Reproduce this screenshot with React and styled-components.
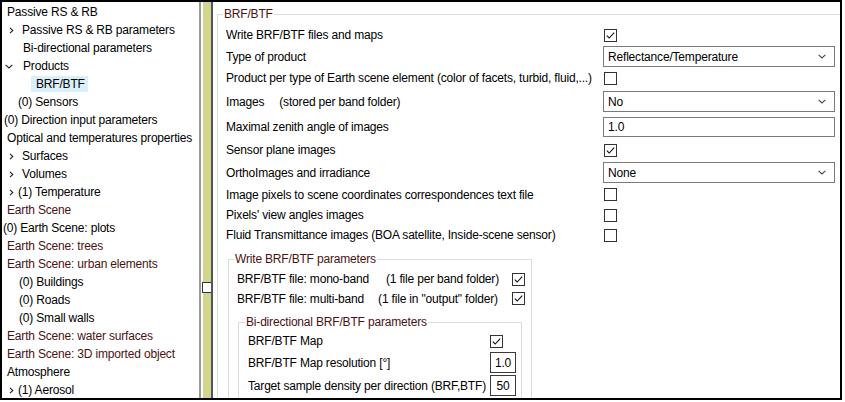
import React from "react";
import styled, { createGlobalStyle } from "styled-components";

const GlobalStyle = createGlobalStyle`
  html, body {
    margin: 0;
    padding: 0;
    background: #fff;
  }
  body {
    font-family: "Liberation Sans", Arial, sans-serif;
    font-size: 12px;
    letter-spacing: -0.18px;
    color: #000;
  }
`;

const Frame = styled.div`
  width: 842px;
  height: 400px;
  box-sizing: border-box;
  border: 2px solid #000;
  display: flex;
  overflow: hidden;
  background: #fff;
`;

const TreePane = styled.div`
  width: 199px;
  flex-shrink: 0;
  box-sizing: border-box;
  padding-top: 1px;
  border-right: 2px solid #9a9a9a;
  overflow: hidden;
`;

const TreeItem = styled.div`
  height: 18px;
  display: flex;
  align-items: center;
  white-space: nowrap;
  color: ${(p) => (p.$scene ? "#4a1212" : "#000")};
`;

const Gutter = styled.span`
  width: ${(p) => p.$w}px;
  padding-left: ${(p) => p.$pad}px;
  box-sizing: border-box;
  flex-shrink: 0;
  display: flex;
  align-items: center;
`;

const ItemLabel = styled.span`
  height: 16px;
  line-height: 16px;
  padding: ${(p) => (p.$selected ? "0 3px 0 5px" : "0")};
  background: ${(p) => (p.$selected ? "#d9f0fa" : "transparent")};
`;

const Splitter = styled.div`
  width: 8px;
  flex-shrink: 0;
  border-left: 2px solid #fff;
  border-right: 2px solid #4e5566;
  background: #d4d78b;
  display: flex;
  flex-direction: column;
`;

const SplitHandle = styled.div`
  margin-top: 280px;
  margin-left: -1px;
  width: 8px;
  height: 9px;
  background: #fff;
  border: 1px solid #333;
  border-right: none;
`;

const ContentPane = styled.div`
  flex: 1;
  min-width: 0;
  padding-left: 4px;
  overflow: hidden;
`;

const Group = styled.fieldset`
  margin: ${(p) => p.$margin};
  padding: ${(p) => p.$padding};
  width: ${(p) => (p.$width ? `${p.$width}px` : "auto")};
  box-sizing: border-box;
  min-width: 0;
  border: 1px solid #dcdcdc;
  border-right: ${(p) => (p.$open ? "none" : "1px solid #dcdcdc")};
  border-bottom: none;
`;

const Caption = styled.legend`
  padding: 0 1px;
  margin-left: -3px;
  line-height: 14px;
  color: #4a1212;
  white-space: nowrap;
`;

const Row = styled.div`
  height: ${(p) => p.$h}px;
  display: flex;
  align-items: center;
  white-space: nowrap;
`;

const Label = styled.span`
  flex: ${(p) => (p.$w ? `0 0 ${p.$w}px` : "1 1 auto")};
  white-space: pre;
`;

const Note = styled.span`
  margin-left: ${(p) => p.$gap}px;
`;

const ControlCell = styled.div`
  width: ${(p) => p.$w}px;
  flex-shrink: 0;
  display: flex;
  align-items: center;
`;

const Box = styled.span`
  width: 13px;
  height: 13px;
  margin-left: ${(p) => p.$offset || 0}px;
  display: inline-flex;
`;

const Combo = styled.div`
  width: 232px;
  height: 21px;
  box-sizing: border-box;
  border: 1px solid #7a7a7a;
  background: #fff;
  display: flex;
  align-items: center;
  justify-content: space-between;
  padding: 0 8px 0 4px;
`;

const TextField = styled.div`
  width: ${(p) => p.$w}px;
  height: ${(p) => p.$h}px;
  box-sizing: border-box;
  border: 1px solid ${(p) => (p.$dark ? "#3a3a3a" : "#7a7a7a")};
  display: flex;
  align-items: center;
  justify-content: ${(p) => (p.$center ? "center" : "flex-start")};
  padding-left: ${(p) => (p.$center ? 0 : 4)}px;
`;

function ChevronRight() {
  return (
    <svg width="5" height="7" viewBox="0 0 5 7">
      <path d="M1 0.8 L3.8 3.5 L1 6.2" fill="none" stroke="#222" strokeWidth="1.1" />
    </svg>
  );
}

function ChevronDown({ color = "#222" }) {
  return (
    <svg width="8" height="5" viewBox="0 0 8 5">
      <path d="M0.6 0.8 L4 4 L7.4 0.8" fill="none" stroke={color} strokeWidth="1.1" />
    </svg>
  );
}

function Check({ on, offset }) {
  return (
    <Box $offset={offset}>
      <svg width="13" height="13" viewBox="0 0 13 13">
        <rect x="0.5" y="0.5" width="12" height="12" fill="#fff" stroke="#333" />
        {on && <path d="M2.8 6.6 L5.2 9 L10.2 3.6" fill="none" stroke="#111" strokeWidth="1.1" />}
      </svg>
    </Box>
  );
}

function Select({ value }) {
  return (
    <Combo>
      <span>{value}</span>
      <ChevronDown color="#444" />
    </Combo>
  );
}

const treeItems = [
  { t: "Passive RS & RB", x: 5 },
  { t: "Passive RS & RB parameters", x: 20, chev: "right" },
  { t: "Bi-directional parameters", x: 21 },
  { t: "Products", x: 21, chev: "down" },
  { t: "BRF/BTF", x: 29, selected: true },
  { t: "(0) Sensors", x: 16 },
  { t: "(0) Direction input parameters", x: 2 },
  { t: "Optical and temperatures properties", x: 5 },
  { t: "Surfaces", x: 20, chev: "right" },
  { t: "Volumes", x: 20, chev: "right" },
  { t: "(1) Temperature", x: 16, chev: "right" },
  { t: "Earth Scene", x: 5, scene: true },
  { t: "(0) Earth Scene: plots", x: 1 },
  { t: "Earth Scene: trees", x: 5, scene: true },
  { t: "Earth Scene: urban elements", x: 5, scene: true },
  { t: "(0) Buildings", x: 17 },
  { t: "(0) Roads", x: 17 },
  { t: "(0) Small walls", x: 17 },
  { t: "Earth Scene: water surfaces", x: 5, scene: true },
  { t: "Earth Scene: 3D imported object", x: 5, scene: true },
  { t: "Atmosphere", x: 5 },
  { t: "(1) Aerosol", x: 16, chev: "right" },
];

const productRows = [
  { label: "Write BRF/BTF files and maps", h: 22, check: true },
  { label: "Type of product", h: 21, select: "Reflectance/Temperature" },
  { label: "Product per type of Earth scene element (color of facets, turbid, fluid,...)", h: 22, check: false },
  { label: "Images", note: "(stored per band folder)", gap: 15, h: 25, select: "No" },
  { label: "Maximal zenith angle of images", h: 25, input: "1.0" },
  { label: "Sensor plane images", h: 22, check: true },
  { label: "OrthoImages and irradiance", h: 23, select: "None" },
  { label: "Image pixels to scene coordinates correspondences text file", h: 21, check: false },
  { label: "Pixels' view angles images", h: 20, check: false },
  { label: "Fluid Transmittance images (BOA satellite, Inside-scene sensor)", h: 20, check: false },
];

function Tree() {
  return (
    <TreePane>
      {treeItems.map((it) => (
        <TreeItem key={it.t} $scene={it.scene}>
          <Gutter $w={it.x} $pad={it.chev === "down" ? 3 : it.chev ? 7 : 0}>
            {it.chev === "right" && <ChevronRight />}
            {it.chev === "down" && <ChevronDown />}
          </Gutter>
          <ItemLabel $selected={it.selected}>{it.t}</ItemLabel>
        </TreeItem>
      ))}
    </TreePane>
  );
}

export default function App() {
  return (
    <>
      <GlobalStyle />
      <Frame>
        <Tree />
        <Splitter>
          <SplitHandle />
        </Splitter>
        <ContentPane>
          <Group $open $margin="5px 0 0 0" $padding="3px 0 40px 8px">
            <Caption>BRF/BTF</Caption>
            {productRows.map((r) => (
              <Row key={r.label} $h={r.h}>
                <Label $w={377}>
                  {r.label}
                  {r.note && <Note $gap={r.gap}>{r.note}</Note>}
                </Label>
                <ControlCell $w={232}>
                  {r.select && <Select value={r.select} />}
                  {r.input && (
                    <TextField $w={232} $h={20}>
                      {r.input}
                    </TextField>
                  )}
                  {r.check !== undefined && <Check on={r.check} offset={1} />}
                </ControlCell>
              </Row>
            ))}

            <Group $width={304} $margin="7px 0 0 2px" $padding="3px 6px 40px 8px">
              <Caption>Write BRF/BTF parameters</Caption>
              <Row $h={20}>
                <Label>
                  BRF/BTF file: mono-band<Note $gap={17}>(1 file per band folder)</Note>
                </Label>
                <Check on />
              </Row>
              <Row $h={19}>
                <Label>
                  BRF/BTF file: multi-band<Note $gap={14}>(1 file in "output" folder)</Note>
                </Label>
                <Check on />
              </Row>

              <Group $width={284} $margin="7px 0 0 1px" $padding="2px 5px 40px 9px">
                <Caption>Bi-directional BRF/BTF parameters</Caption>
                <Row $h={20}>
                  <Label>BRF/BTF Map</Label>
                  <ControlCell $w={26}>
                    <Check on />
                  </ControlCell>
                </Row>
                <Row $h={23}>
                  <Label>BRF/BTF Map resolution [°]</Label>
                  <ControlCell $w={26}>
                    <TextField $w={26} $h={21} $center $dark>
                      1.0
                    </TextField>
                  </ControlCell>
                </Row>
                <Row $h={23}>
                  <Label>Target sample density per direction (BRF,BTF)</Label>
                  <ControlCell $w={26}>
                    <TextField $w={26} $h={21} $center $dark>
                      50
                    </TextField>
                  </ControlCell>
                </Row>
              </Group>
            </Group>
          </Group>
        </ContentPane>
      </Frame>
    </>
  );
}
